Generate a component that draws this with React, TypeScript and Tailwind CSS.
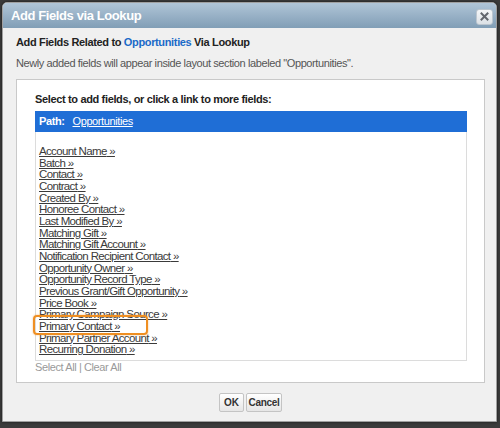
import React from 'react';

const fields = [
  'Account Name',
  'Batch',
  'Contact',
  'Contract',
  'Created By',
  'Honoree Contact',
  'Last Modified By',
  'Matching Gift',
  'Matching Gift Account',
  'Notification Recipient Contact',
  'Opportunity Owner',
  'Opportunity Record Type',
  'Previous Grant/Gift Opportunity',
  'Price Book',
  'Primary Campaign Source',
  'Primary Contact',
  'Primary Partner Account',
  'Recurring Donation',
];

const App: React.FC = () => {
  return (
    <div
      className="w-[500px] h-[428px] bg-[#3b3b3b] pt-[2px] pl-[2px] overflow-hidden"
      style={{ fontFamily: '"Liberation Sans", Arial, sans-serif' }}
    >
      <div className="w-[495px] h-[420px] bg-[#f0f0f0] border border-[#a0a0a0] rounded-t-[5px] overflow-hidden flex flex-col shadow-[0_0_3px_rgba(0,0,0,0.6)]">
        {/* title bar */}
        <div className="h-[25px] shrink-0 bg-gradient-to-b from-[#b0c5d7] to-[#819eb6] pl-[8px] pr-[3px] flex items-center justify-between">
          <span className="text-[13px] font-bold text-white tracking-[-0.4px]">Add Fields via Lookup</span>
          <button className="w-[17px] h-[16px] mt-[2px] rounded-[3px] border border-[#bcc6cf] bg-gradient-to-b from-[#f4f6f8] to-[#dce1e6] flex items-center justify-center">
            <svg width="9" height="9" viewBox="0 0 9 9">
              <path d="M1.5 1.5 L7.5 7.5 M7.5 1.5 L1.5 7.5" stroke="#62676e" strokeWidth="2" strokeLinecap="square" />
            </svg>
          </button>
        </div>

        <div className="pl-[13px] pr-[11px]">
          <div className="mt-[8px] text-[11px] leading-[13px] font-bold text-[#222] tracking-[-0.35px]">
            Add Fields Related to <span className="text-[#1a6ac8]">Opportunities</span> Via Lookup
          </div>
          <div className="mt-[8px] text-[11px] leading-[13px] text-[#555] tracking-[-0.4px]">
            Newly added fields will appear inside layout section labeled "Opportunities".
          </div>

          {/* selection box */}
          <div className="mt-[9px] h-[304px] bg-white border border-[#c9c9c9] pl-[18px] pr-[17px] pt-[13px]">
            <div className="text-[11px] leading-[13px] font-bold text-[#222] tracking-[-0.35px]">
              Select to add fields, or click a link to more fields:
            </div>
            <div className="mt-[5px] h-[21px] bg-[#1f6ed6] flex items-center pl-[4px] text-[11px] text-white tracking-[-0.4px]">
              <span className="font-bold">Path:</span>
              <span className="ml-[8px] underline">Opportunities</span>
            </div>
            <div className="relative border border-t-0 border-[#dcdcdc] pl-[3px] pt-[14px] pb-[4px]">
              {fields.map((f) => (
                <div key={f} className="text-[11.5px] leading-[11.66px] text-[#3a3a3a] tracking-[-0.65px]">
                  <span className="underline">{f} »</span>
                </div>
              ))}
              <div className="absolute left-[-3px] top-[183px] w-[115px] h-[20px] border-2 border-[#ef8f22] rounded-[4px] shadow-[0_0_2px_rgba(239,143,34,0.6)]" />
            </div>
            <div className="text-[11px] leading-[13px] text-[#9a9a9a] tracking-[-0.4px]">
              Select All | Clear All
            </div>
          </div>

          {/* buttons */}
          <div className="mt-[10px] flex justify-center gap-[2px]">
            <button className="w-[25px] h-[19px] rounded-[2px] border border-[#c4c4c4] bg-gradient-to-b from-white to-[#e6e6e6] text-[10px] font-bold text-[#333]">
              OK
            </button>
            <button className="w-[36px] h-[19px] rounded-[2px] border border-[#c4c4c4] bg-gradient-to-b from-white to-[#e6e6e6] text-[10px] font-bold text-[#333] tracking-[-0.3px]">
              Cancel
            </button>
          </div>
        </div>
      </div>
    </div>
  );
};

export default App;
